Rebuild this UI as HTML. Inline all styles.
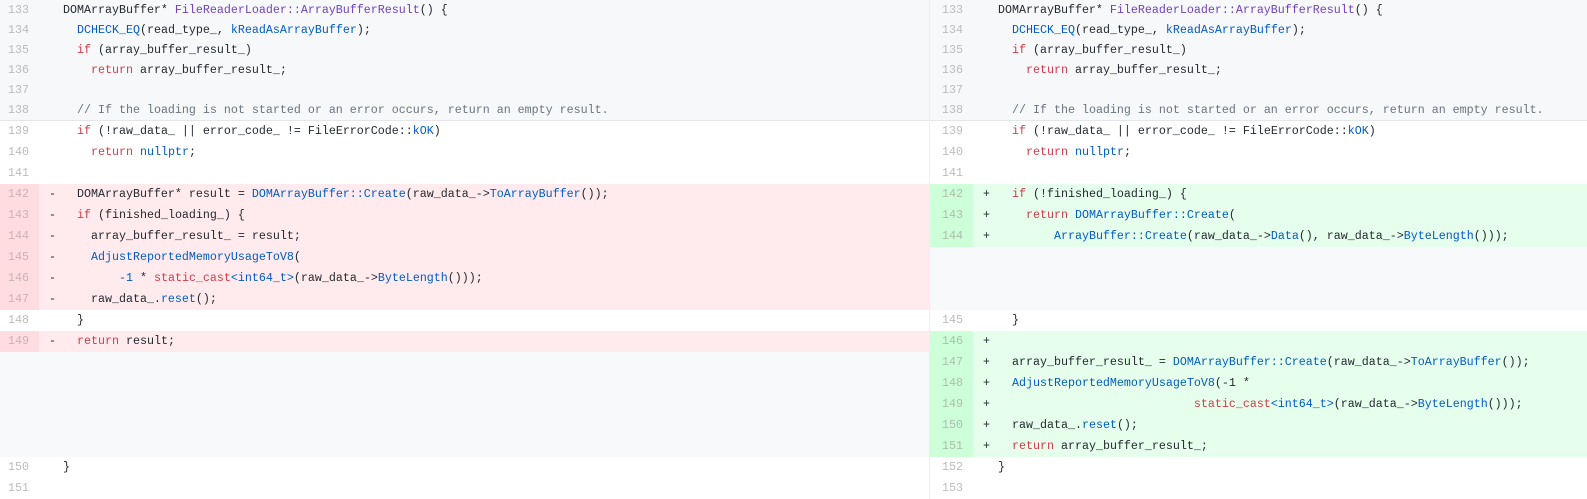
<!DOCTYPE html>
<html><head><meta charset="utf-8"><style>
*{margin:0;padding:0;box-sizing:border-box}
body{width:1587px;height:499px;background:#fff;position:relative;overflow:hidden;font-family:"Liberation Mono",monospace;font-size:11.67px;color:#24292e}
.r{position:absolute;height:21px;line-height:21px}
.t{height:20px;line-height:20px;background:#f7f8fa}
.L{left:0;width:929px}
.R{left:930px;width:657px}
.n{position:absolute;top:0;height:100%;text-align:right;color:#bcbcbc;padding-right:10px}
.L .n{left:0;width:39px}
.R .n{left:0;width:43px}
.s{position:absolute;top:0}
.L .s{left:49px}
.R .s{left:53px}
.c{position:absolute;top:0;white-space:pre}
.L .c{left:63px}
.R .c{left:68px}
.del{background:#ffebee}.del .n{background:#ffdce0;color:#c9b3b6}
.add{background:#e6ffed}.add .n{background:#cdffd8;color:#a9c0ae}
.gap{background:#f8f9fb}
k{color:#d73a49}b{color:#005cc5;font-weight:normal}.p{color:#6f42c1}g{color:#6a737d}
</style></head><body>
<div style="position:absolute;left:0;top:0;width:1587px;height:120px;background:#f7f8fa"></div>
<div style="position:absolute;left:0;top:120px;width:1587px;height:1px;background:#e4e6ea"></div>
<div style="position:absolute;left:929px;top:0;width:1px;height:499px;background:#eceef1"></div>

<!-- LEFT -->
<div class="r t L" style="top:0"><span class="n">133</span><span class="c">DOMArrayBuffer* <span class="p">FileReaderLoader::ArrayBufferResult</span>() {</span></div>
<div class="r t L" style="top:20px"><span class="n">134</span><span class="c">  <b>DCHECK_EQ</b>(read_type_, <b>kReadAsArrayBuffer</b>);</span></div>
<div class="r t L" style="top:40px"><span class="n">135</span><span class="c">  <k>if</k> (array_buffer_result_)</span></div>
<div class="r t L" style="top:60px"><span class="n">136</span><span class="c">    <k>return</k> array_buffer_result_;</span></div>
<div class="r t L" style="top:80px"><span class="n">137</span></div>
<div class="r t L" style="top:100px"><span class="n">138</span><span class="c">  <g>// If the loading is not started or an error occurs, return an empty result.</g></span></div>
<div class="r L" style="top:121px"><span class="n">139</span><span class="c">  <k>if</k> (!raw_data_ || error_code_ != FileErrorCode::<b>kOK</b>)</span></div>
<div class="r L" style="top:142px"><span class="n">140</span><span class="c">    <k>return</k> <b>nullptr</b>;</span></div>
<div class="r L" style="top:163px"><span class="n">141</span></div>
<div class="r L del" style="top:184px"><span class="n">142</span><span class="s">-</span><span class="c">  DOMArrayBuffer* result = <b>DOMArrayBuffer::Create</b>(raw_data_-><b>ToArrayBuffer</b>());</span></div>
<div class="r L del" style="top:205px"><span class="n">143</span><span class="s">-</span><span class="c">  <k>if</k> (finished_loading_) {</span></div>
<div class="r L del" style="top:226px"><span class="n">144</span><span class="s">-</span><span class="c">    array_buffer_result_ = result;</span></div>
<div class="r L del" style="top:247px"><span class="n">145</span><span class="s">-</span><span class="c">    <b>AdjustReportedMemoryUsageToV8</b>(</span></div>
<div class="r L del" style="top:268px"><span class="n">146</span><span class="s">-</span><span class="c">        <b>-1</b> * <k>static_cast</k><b>&lt;int64_t&gt;</b>(raw_data_-><b>ByteLength</b>()));</span></div>
<div class="r L del" style="top:289px"><span class="n">147</span><span class="s">-</span><span class="c">    raw_data_.<b>reset</b>();</span></div>
<div class="r L" style="top:310px"><span class="n">148</span><span class="c">  }</span></div>
<div class="r L del" style="top:331px"><span class="n">149</span><span class="s">-</span><span class="c">  <k>return</k> result;</span></div>
<div class="r L gap" style="top:352px;height:105px"></div>
<div class="r L" style="top:457px"><span class="n">150</span><span class="c">}</span></div>
<div class="r L" style="top:478px"><span class="n">151</span></div>

<!-- RIGHT -->
<div class="r t R" style="top:0"><span class="n">133</span><span class="c">DOMArrayBuffer* <span class="p">FileReaderLoader::ArrayBufferResult</span>() {</span></div>
<div class="r t R" style="top:20px"><span class="n">134</span><span class="c">  <b>DCHECK_EQ</b>(read_type_, <b>kReadAsArrayBuffer</b>);</span></div>
<div class="r t R" style="top:40px"><span class="n">135</span><span class="c">  <k>if</k> (array_buffer_result_)</span></div>
<div class="r t R" style="top:60px"><span class="n">136</span><span class="c">    <k>return</k> array_buffer_result_;</span></div>
<div class="r t R" style="top:80px"><span class="n">137</span></div>
<div class="r t R" style="top:100px"><span class="n">138</span><span class="c">  <g>// If the loading is not started or an error occurs, return an empty result.</g></span></div>
<div class="r R" style="top:121px"><span class="n">139</span><span class="c">  <k>if</k> (!raw_data_ || error_code_ != FileErrorCode::<b>kOK</b>)</span></div>
<div class="r R" style="top:142px"><span class="n">140</span><span class="c">    <k>return</k> <b>nullptr</b>;</span></div>
<div class="r R" style="top:163px"><span class="n">141</span></div>
<div class="r R add" style="top:184px"><span class="n">142</span><span class="s">+</span><span class="c">  <k>if</k> (!finished_loading_) {</span></div>
<div class="r R add" style="top:205px"><span class="n">143</span><span class="s">+</span><span class="c">    <k>return</k> <b>DOMArrayBuffer::Create</b>(</span></div>
<div class="r R add" style="top:226px"><span class="n">144</span><span class="s">+</span><span class="c">        <b>ArrayBuffer::Create</b>(raw_data_-><b>Data</b>(), raw_data_-><b>ByteLength</b>()));</span></div>
<div class="r R gap" style="top:247px;height:63px"></div>
<div class="r R" style="top:310px"><span class="n">145</span><span class="c">  }</span></div>
<div class="r R add" style="top:331px"><span class="n">146</span><span class="s">+</span></div>
<div class="r R add" style="top:352px"><span class="n">147</span><span class="s">+</span><span class="c">  array_buffer_result_ = <b>DOMArrayBuffer::Create</b>(raw_data_-><b>ToArrayBuffer</b>());</span></div>
<div class="r R add" style="top:373px"><span class="n">148</span><span class="s">+</span><span class="c">  <b>AdjustReportedMemoryUsageToV8</b>(-1 *</span></div>
<div class="r R add" style="top:394px"><span class="n">149</span><span class="s">+</span><span class="c">                            <k>static_cast</k><b>&lt;int64_t&gt;</b>(raw_data_-><b>ByteLength</b>()));</span></div>
<div class="r R add" style="top:415px"><span class="n">150</span><span class="s">+</span><span class="c">  raw_data_.<b>reset</b>();</span></div>
<div class="r R add" style="top:436px"><span class="n">151</span><span class="s">+</span><span class="c">  <k>return</k> array_buffer_result_;</span></div>
<div class="r R" style="top:457px"><span class="n">152</span><span class="c">}</span></div>
<div class="r R" style="top:478px"><span class="n">153</span></div>
</body></html>
